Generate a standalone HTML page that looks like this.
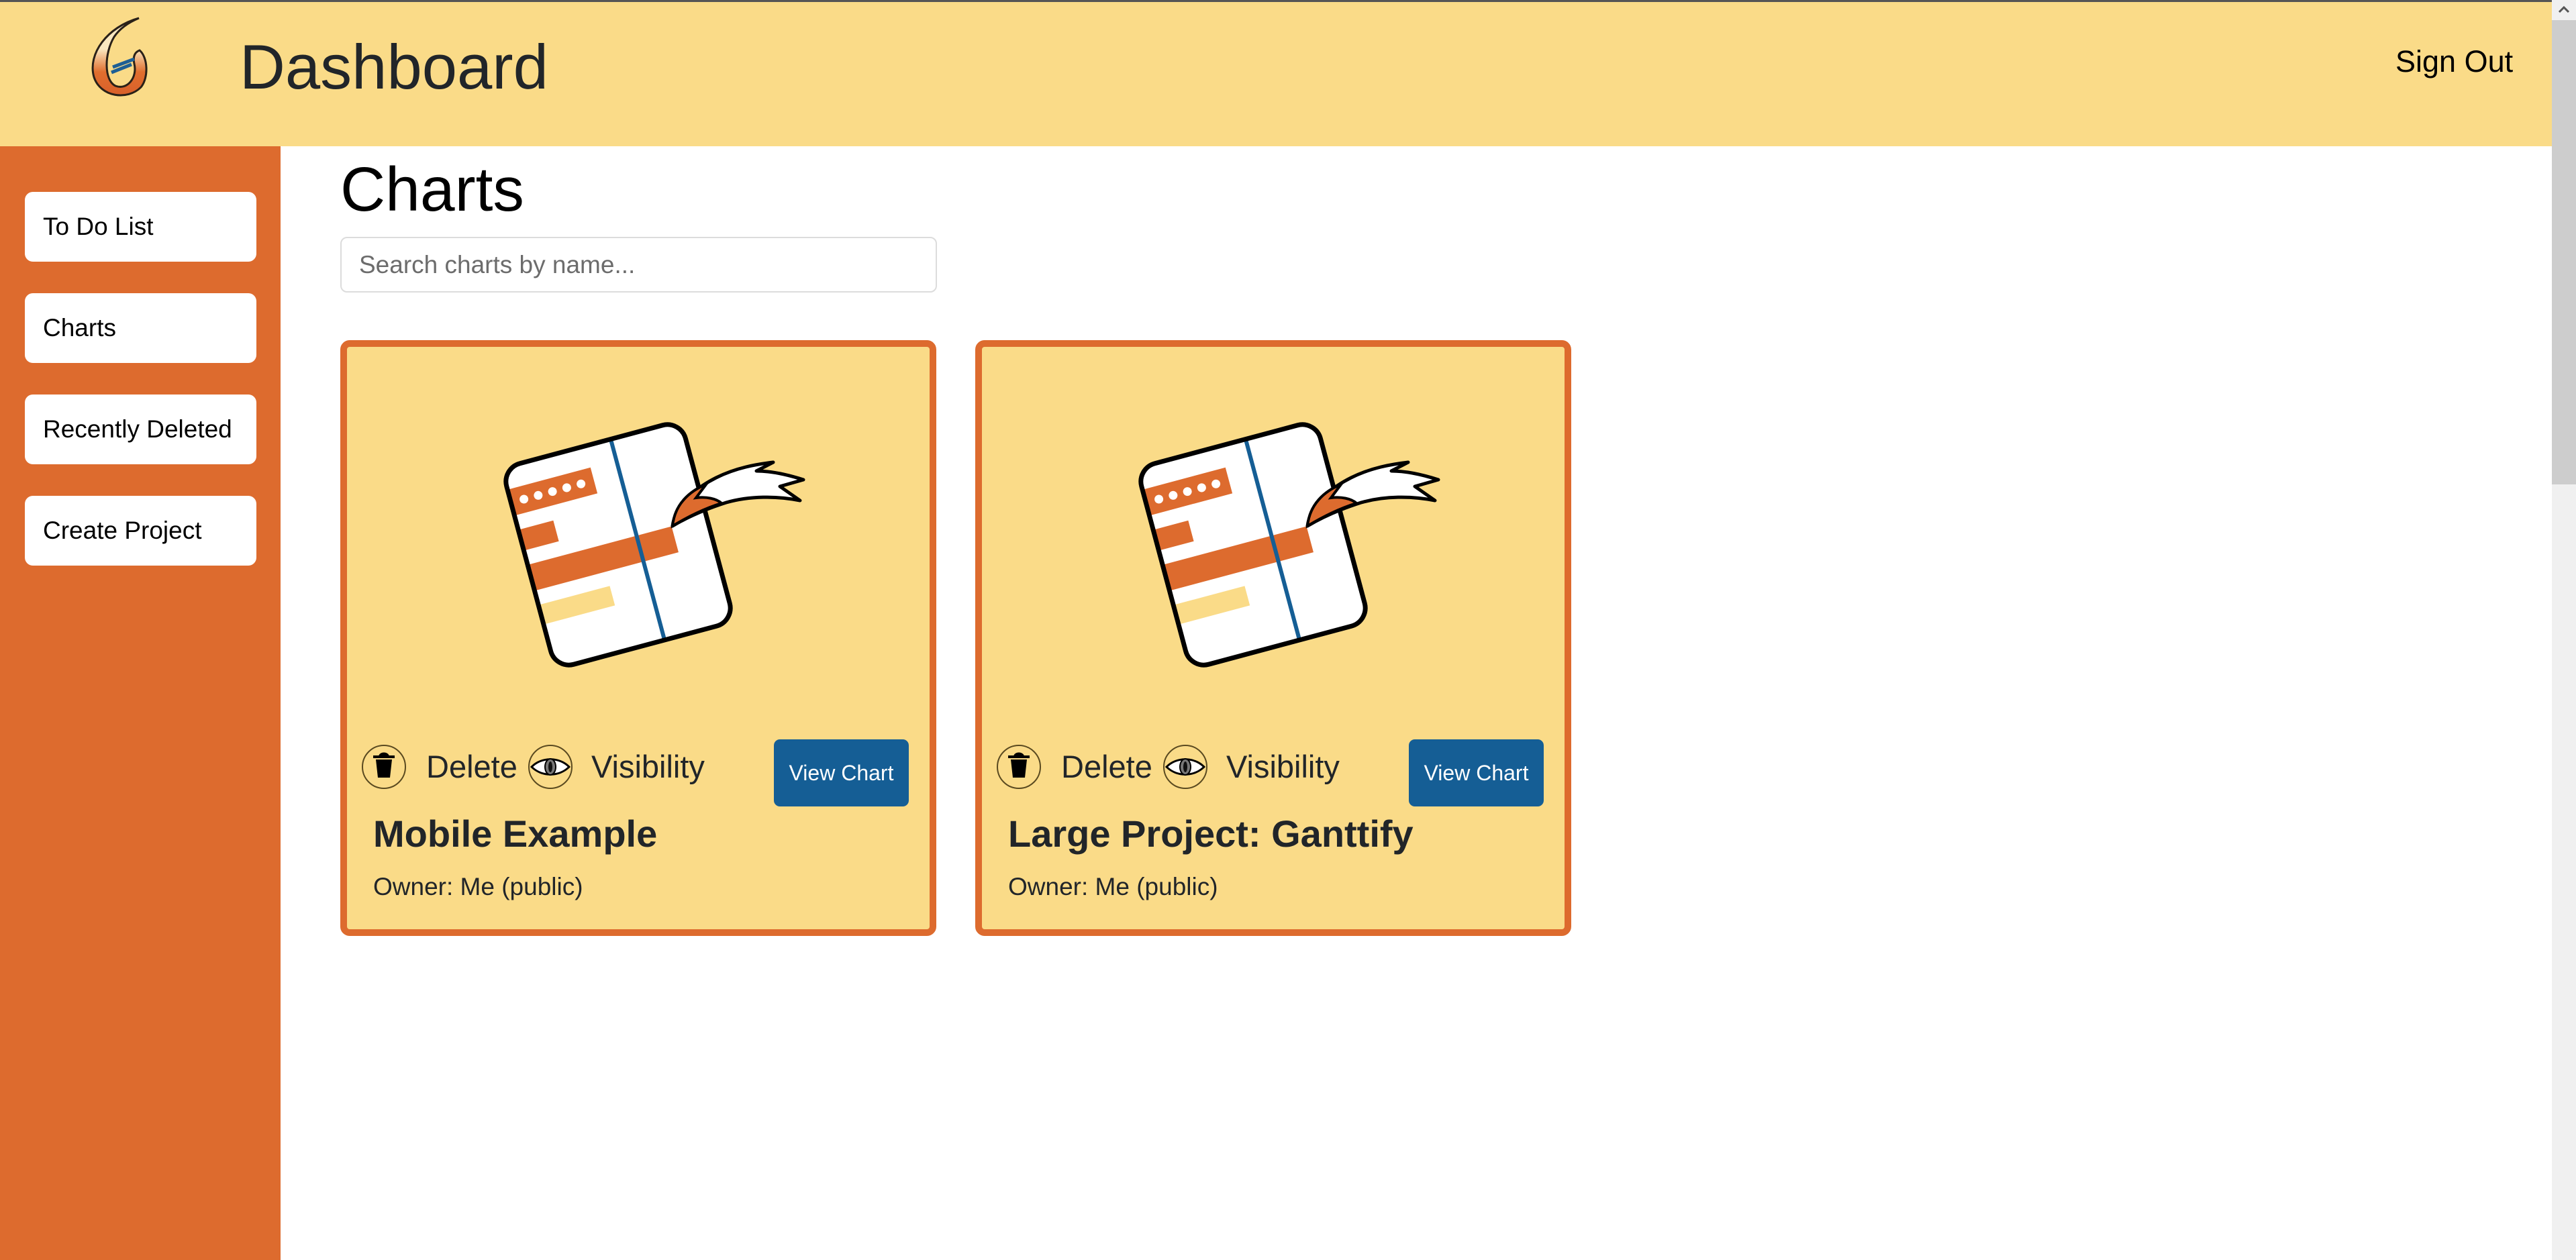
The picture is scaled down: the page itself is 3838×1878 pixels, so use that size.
<!DOCTYPE html>
<html><head><meta charset="utf-8"><style>
*{margin:0;padding:0;box-sizing:border-box}
body{width:3838px;height:1878px;overflow:hidden;background:#fff;font-family:"Liberation Sans",sans-serif;color:#212529;position:relative}
.hdr{position:absolute;left:0;top:0;width:3802px;height:218px;background:#FADB88;border-top:3px solid #555}
.abs{position:absolute;white-space:nowrap}
.side{position:absolute;left:0;top:218px;width:418px;height:1660px;background:#DD6B2E}
.nav{position:absolute;left:37px;width:345px;height:104px;background:#fff;border-radius:12px;font-size:37px;color:#000;padding-left:27px;line-height:104px}
.sb{position:absolute;left:3802px;top:0;width:36px;height:1878px;background:#f0f0f0}
.thumb{position:absolute;left:3802px;top:30px;width:36px;height:692px;background:#cdcdcd}
.card{position:absolute;top:507px;width:888px;height:888px;background:#FADB88;border:10px solid #DD6B2E;border-radius:14px}
.card .in{position:absolute;left:-10px;top:-10px;width:888px;height:888px}
.circ{position:absolute;top:603px;width:66px;height:66px;border:2px solid #5a4a20;border-radius:50%}
.lbl{position:absolute;top:606px;font-size:47px;line-height:60px;color:#212529}
.btn{position:absolute;left:646px;top:595px;width:201px;height:100px;background:#155E95;border-radius:9px;color:#fff;font-size:32px;text-align:center;line-height:100px}
.ttl{position:absolute;left:49px;top:704px;font-size:56px;font-weight:bold;line-height:64px}
.own{position:absolute;left:49px;top:792px;font-size:37px;line-height:46px}
</style></head><body>
<div class="hdr"></div>
<svg class="abs" style="left:0;top:0" width="260" height="218" viewBox="0 0 260 218">
<defs><linearGradient id="lg" x1="0" y1="0" x2="0" y2="1"><stop offset="0.4" stop-color="#FAE8C0"/><stop offset="0.7" stop-color="#E06E2E"/><stop offset="1" stop-color="#D8602A"/></linearGradient></defs>
<path d="M207,27 C160,40 130,80 140,115 C150,145 190,150 210,130 C222,115 220,85 208,75 C200,78 198,85 200,95 C205,115 190,135 172,128 C155,120 155,80 170,55 C180,40 195,32 207,27 Z" fill="url(#lg)" stroke="#2a2118" stroke-width="3"/>
<path d="M168,100 L200,88 M166,108 L196,96" stroke="#1e5f95" stroke-width="5"/>
</svg>
<div class="abs" style="left:357px;top:40px;font-size:94px;line-height:120px;color:#212529">Dashboard</div>
<div class="abs" style="left:3569px;top:64px;font-size:45px;line-height:56px;color:#000">Sign Out</div>
<div class="side"></div>
<div class="nav" style="top:286px">To Do List</div>
<div class="nav" style="top:437px">Charts</div>
<div class="nav" style="top:588px">Recently Deleted</div>
<div class="nav" style="top:739px">Create Project</div>
<div class="abs" style="left:507px;top:222px;font-size:93px;line-height:120px;color:#000">Charts</div>
<div class="abs" style="left:507px;top:353px;width:889px;height:83px;border:2px solid #dcdcdc;border-radius:10px;font-size:37px;line-height:79px;padding-left:26px;color:#6c6c6c">Search charts by name...</div>
<div class="sb"></div><div class="thumb"></div>
<svg class="abs" style="left:3812px;top:8px" width="16" height="12"><path d="M1,10 L8,3 L15,10" stroke="#555" stroke-width="3" fill="none"/></svg>

<!--CARD1-->
<div class="card" style="left:507px"><div class="in">
<svg class="abs" style="left:0;top:0" width="888" height="600" viewBox="0 0 888 600">
<g transform="translate(414,305) rotate(-15)">
<rect x="-138" y="-155" width="276" height="310" rx="28" fill="#fff"/>
<rect x="-138" y="-122" width="128" height="40" fill="#DD6B2E"/>
<g fill="#fff"><circle cx="-118" cy="-102" r="6.5"/><circle cx="-96" cy="-102" r="6.5"/><circle cx="-74" cy="-102" r="6.5"/><circle cx="-52" cy="-102" r="6.5"/><circle cx="-30" cy="-102" r="6.5"/></g>
<rect x="-138" y="-60" width="54" height="32" fill="#DD6B2E"/>
<rect x="-138" y="-6" width="222" height="40" fill="#DD6B2E"/>
<rect x="-138" y="56" width="110" height="30" fill="#FADB88"/>
<line x1="30" y1="-155" x2="30" y2="155" stroke="#155E95" stroke-width="6"/>
<rect x="-138" y="-155" width="276" height="310" rx="28" fill="none" stroke="#000" stroke-width="7"/>
</g>
<path d="M495,277 C500,240 540,215 560,205 C590,190 620,185 645,182 L620,195 C640,195 665,200 690,208 L655,218 L685,239 C650,232 610,232 575,242 C550,250 520,262 495,277 Z" fill="#fff" stroke="#000" stroke-width="5" stroke-linejoin="round"/>
<path d="M495,277 C498,245 520,225 545,215 L530,235 C545,233 560,236 568,243 C545,250 520,262 495,277 Z" fill="#DD6B2E" stroke="#000" stroke-width="4"/>
</svg>
<div class="circ" style="left:32px"><svg width="62" height="62" viewBox="0 0 62 62"><path d="M15,16 L47,16 M25,16 C25,10 37,10 37,16" stroke="#000" stroke-width="4" fill="#000"/><path d="M19,20 L43,20 L40,47 L22,47 Z" fill="#000"/></svg></div>
<div class="lbl" style="left:128px">Delete</div>
<div class="circ" style="left:280px"><svg width="62" height="62" viewBox="0 0 62 62"><path d="M3,31 C18,16 44,16 59,31 C44,46 18,46 3,31 Z" fill="#fff" stroke="#000" stroke-width="3"/><ellipse cx="31" cy="31" rx="8" ry="12" fill="#777" stroke="#000" stroke-width="2"/><ellipse cx="31" cy="31" rx="3" ry="8" fill="#111"/></svg></div>
<div class="lbl" style="left:374px">Visibility</div>
<div class="btn">View Chart</div>
<div class="ttl">Mobile Example</div>
<div class="own">Owner: Me (public)</div>
</div></div>

<!--CARD2-->
<div class="card" style="left:1453px"><div class="in">
<svg class="abs" style="left:0;top:0" width="888" height="600" viewBox="0 0 888 600">
<g transform="translate(414,305) rotate(-15)">
<rect x="-138" y="-155" width="276" height="310" rx="28" fill="#fff"/>
<rect x="-138" y="-122" width="128" height="40" fill="#DD6B2E"/>
<g fill="#fff"><circle cx="-118" cy="-102" r="6.5"/><circle cx="-96" cy="-102" r="6.5"/><circle cx="-74" cy="-102" r="6.5"/><circle cx="-52" cy="-102" r="6.5"/><circle cx="-30" cy="-102" r="6.5"/></g>
<rect x="-138" y="-60" width="54" height="32" fill="#DD6B2E"/>
<rect x="-138" y="-6" width="222" height="40" fill="#DD6B2E"/>
<rect x="-138" y="56" width="110" height="30" fill="#FADB88"/>
<line x1="30" y1="-155" x2="30" y2="155" stroke="#155E95" stroke-width="6"/>
<rect x="-138" y="-155" width="276" height="310" rx="28" fill="none" stroke="#000" stroke-width="7"/>
</g>
<path d="M495,277 C500,240 540,215 560,205 C590,190 620,185 645,182 L620,195 C640,195 665,200 690,208 L655,218 L685,239 C650,232 610,232 575,242 C550,250 520,262 495,277 Z" fill="#fff" stroke="#000" stroke-width="5" stroke-linejoin="round"/>
<path d="M495,277 C498,245 520,225 545,215 L530,235 C545,233 560,236 568,243 C545,250 520,262 495,277 Z" fill="#DD6B2E" stroke="#000" stroke-width="4"/>
</svg>
<div class="circ" style="left:32px"><svg width="62" height="62" viewBox="0 0 62 62"><path d="M15,16 L47,16 M25,16 C25,10 37,10 37,16" stroke="#000" stroke-width="4" fill="#000"/><path d="M19,20 L43,20 L40,47 L22,47 Z" fill="#000"/></svg></div>
<div class="lbl" style="left:128px">Delete</div>
<div class="circ" style="left:280px"><svg width="62" height="62" viewBox="0 0 62 62"><path d="M3,31 C18,16 44,16 59,31 C44,46 18,46 3,31 Z" fill="#fff" stroke="#000" stroke-width="3"/><ellipse cx="31" cy="31" rx="8" ry="12" fill="#777" stroke="#000" stroke-width="2"/><ellipse cx="31" cy="31" rx="3" ry="8" fill="#111"/></svg></div>
<div class="lbl" style="left:374px">Visibility</div>
<div class="btn">View Chart</div>
<div class="ttl">Large Project: Ganttify</div>
<div class="own">Owner: Me (public)</div>
</div></div>
</body></html>
